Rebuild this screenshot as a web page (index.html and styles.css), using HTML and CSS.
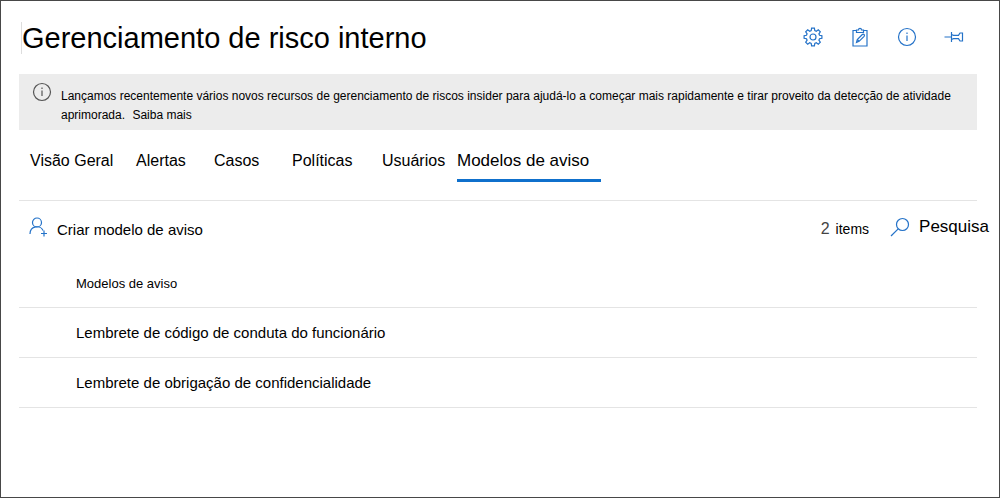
FILE: index.html
```html
<!DOCTYPE html>
<html lang="pt-BR">
<head>
<meta charset="utf-8">
<meta name="viewport" content="width=device-width, initial-scale=1">
<title>Gerenciamento de risco interno</title>
<link rel="stylesheet" href="styles.css">
</head>
<body>
<main class="page">
  <header class="header">
    <h1 class="title">Gerenciamento de risco interno</h1>
    <div class="actions">
      <button class="icon-button" type="button" aria-label="Configurações">
        <svg class="icon" viewBox="0 0 20 20"><path d="M8.600 1.200h2.800l.4 2.400 1.500.6 2-1.400 2 2-1.400 2 .6 1.500 2.400.4v2.600l-2.400.4-.6 1.500 1.400 2-2 2-2-1.400-1.500.6-.4 2.400H8.600l-.4-2.400-1.500-.6-2 1.400-2-2 1.400-2-.6-1.500-2.400-.4V8.700l2.400-.4.6-1.500-1.400-2 2-2 2 1.400 1.500-.6z"/><circle cx="10" cy="10" r="3"/></svg>
      </button>
      <button class="icon-button" type="button" aria-label="Tarefas">
        <svg class="icon" viewBox="0 0 20 20"><path d="M6.500 3.500h-3.500v15.500h14V3.500h-3.500M6.500 5.500V3h2c0-2.200 3-2.200 3 0h2v2.500zM6.500 15.500l.8-3 5-5c1.300-1 2.800.5 1.800 1.800l-5 5zM7.500 12.700l1.700 1.700"/></svg>
      </button>
      <button class="icon-button" type="button" aria-label="Informações">
        <svg class="icon" viewBox="0 0 20 20"><circle cx="10" cy="10" r="8.500"/><path d="M10 8.500v5.500M10 5.500v1.500"/></svg>
      </button>
      <button class="icon-button" type="button" aria-label="Fixar">
        <svg class="icon" viewBox="0 0 20 20"><path d="M.5 10H7.500M7.500 5v10M7.500 7.500l2 .8h5l1.500-2.300h2.500v8h-2.500l-1.500-2.300h-5l-2 .8"/></svg>
      </button>
    </div>
  </header>

  <section class="banner">
    <svg class="icon banner-icon" viewBox="0 0 20 20" aria-hidden="true"><circle cx="10" cy="10" r="8.500"/><path d="M10 8.500v5.500M10 5.500v1.500"/></svg>
    <p class="banner-text">Lançamos recentemente vários novos recursos de gerenciamento de riscos insider para ajudá-lo a começar mais rapidamente e tirar proveito da detecção de atividade aprimorada. <a class="banner-link" href="#">Saiba mais</a></p>
  </section>

  <nav class="tabs">
    <a class="tab" href="#">Visão Geral</a>
    <a class="tab" href="#">Alertas</a>
    <a class="tab" href="#">Casos</a>
    <a class="tab" href="#">Políticas</a>
    <a class="tab" href="#">Usuários</a>
    <a class="tab tab-active" href="#" aria-current="page">Modelos de aviso</a>
  </nav>

  <div class="toolbar">
    <button class="create" type="button">
      <svg class="icon" viewBox="0 0 20 20" aria-hidden="true"><circle cx="9" cy="5.500" r="4.500"/><path d="M2 17c0-9 11-9 13-3.500M16 13.500v6M13 16.500h6"/></svg>
      <span class="create-label">Criar modelo de aviso</span>
    </button>
    <div class="toolbar-end">
      <p class="count"><span class="count-number">2</span><span>items</span></p>
      <button class="search" type="button">
        <svg class="icon" viewBox="0 0 20 20" aria-hidden="true"><circle cx="12.500" cy="7.500" r="6"/><path d="M8.200 11.800L1 19"/></svg>
        <span>Pesquisa</span>
      </button>
    </div>
  </div>

  <table class="templates">
    <thead>
      <tr><th class="cell cell-head" scope="col">Modelos de aviso</th></tr>
    </thead>
    <tbody>
      <tr><td class="cell">Lembrete de código de conduta do funcionário</td></tr>
      <tr><td class="cell">Lembrete de obrigação de confidencialidade</td></tr>
    </tbody>
  </table>
</main>
</body>
</html>
```
FILE: styles.css
```css
* {
  box-sizing: border-box;
}

body {
  margin: 0;
  background: #fff;
  color: #000;
  font-family: "Liberation Sans", Arial, sans-serif;
  font-size: 14px;
}

button {
  padding: 0;
  border: 0;
  background: none;
  color: inherit;
  font: inherit;
  cursor: pointer;
}

a {
  color: inherit;
  text-decoration: none;
}

.page {
  min-height: 100vh;
  padding: 0 22px 24px 18px;
  border: 1px solid #484848;
}

.icon {
  display: block;
  flex: none;
  width: 20px;
  height: 20px;
  fill: none;
  stroke: #2472c8;
  stroke-width: 1.2;
}

.header {
  display: flex;
  align-items: center;
  justify-content: space-between;
  height: 73px;
  padding: 0 13px 0 2px;
}

.title {
  margin: 0;
  border-left: 1px solid #ddd;
  font-size: 29px;
  font-weight: 400;
  line-height: 32px;
}

.actions {
  display: flex;
  gap: 27px;
  padding-bottom: 2px;
}

.banner {
  display: flex;
  align-items: flex-start;
  gap: 9px;
  padding: 8px 16px 5px 13px;
  background: #ececec;
}

.banner-icon {
  stroke: #555;
}

.banner-text {
  margin: 0;
  padding-top: 5px;
  font-size: 12px;
  line-height: 19px;
}

.banner-link {
  display: inline-block;
  margin-left: 4px;
}

.tabs {
  display: grid;
  grid-template-columns: 106px 78px 78px 90px 75px 144px;
  padding: 12px 0 18px 11px;
  border-bottom: 1px solid #e4e4e4;
  font-size: 16px;
  line-height: 37px;
}

.tab {
  border-bottom: 3px solid transparent;
  white-space: nowrap;
}

.tab-active {
  border-color: #0f70cc;
  font-size: 17px;
}

.toolbar {
  display: flex;
  align-items: center;
  justify-content: space-between;
  height: 52px;
  margin-right: -12px;
  padding-left: 9px;
}

.create,
.search,
.toolbar-end {
  display: flex;
  align-items: center;
}

.create {
  gap: 9px;
  font-size: 15px;
}

.create-label {
  padding-top: 5px;
}

.toolbar-end {
  gap: 21px;
}

.count {
  display: flex;
  align-items: baseline;
  gap: 6px;
  margin: 0;
  padding-top: 3px;
}

.count-number {
  color: #444;
  font-size: 16px;
}

.search {
  gap: 9px;
  font-size: 17px;
}

.templates {
  width: 100%;
  border-collapse: collapse;
}

.cell {
  height: 50px;
  padding: 0 57px;
  border-bottom: 1px solid #e4e4e4;
  font-size: 15px;
  text-align: left;
}

.cell-head {
  height: 54px;
  padding-top: 8px;
  font-size: 13px;
  font-weight: 400;
}
```
